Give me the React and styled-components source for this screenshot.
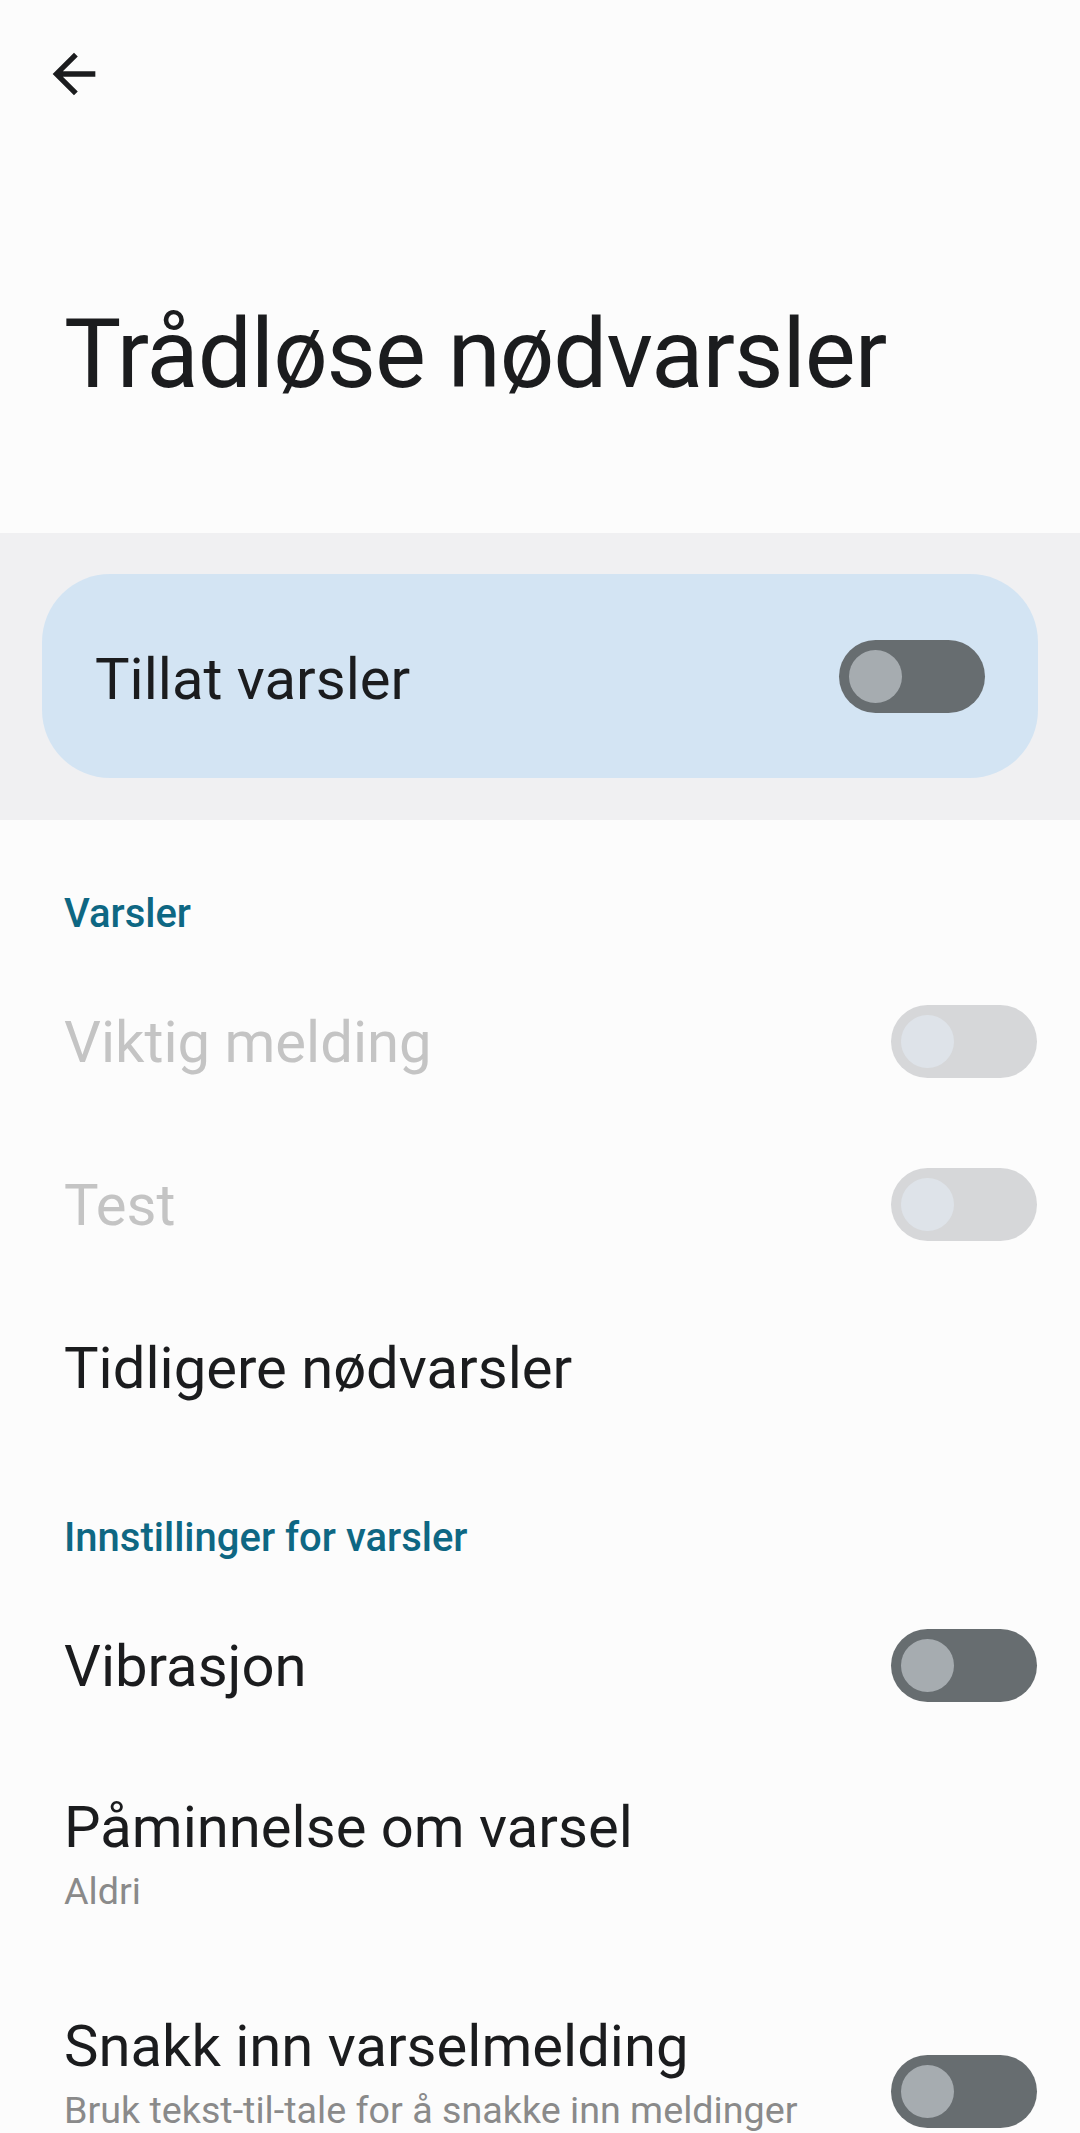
import styled, { createGlobalStyle } from 'styled-components';

const GlobalStyle = createGlobalStyle`
  body {
    margin: 0;
    background: #fcfcfc;
    font-family: Roboto, "Noto Sans", sans-serif;
    color: #1b1c1e;
  }
`;

function BackArrow(){
    return(
        <svg width="64" height="64" viewBox="0 0 24 24" fill="#1b1c1e">
            <path d="M20 11H7.83l5.59-5.59L12 4l-8 8 8 8 1.41-1.41L7.83 13H20v-2z" />
        </svg>
    );
}

function Toggle({ disabled, shift }){
    return(
        <Track $disabled={disabled} $shift={shift}>
            <Thumb $disabled={disabled} />
        </Track>
    );
}

export default function App(){
    return(
        <Page>
            <GlobalStyle />
            <TopBar>
                <BackButton><BackArrow /></BackButton>
            </TopBar>
            <Title>Trådløse nødvarsler</Title>
            <Band>
                <MainCard>
                    <CardLabel>Tillat varsler</CardLabel>
                    <Toggle />
                </MainCard>
            </Band>

            <SectionHeader $top={68}>Varsler</SectionHeader>
            <Row>
                <TextCol><ItemTitle $disabled>Viktig melding</ItemTitle></TextCol>
                <Toggle disabled />
            </Row>
            <Row>
                <TextCol><ItemTitle $disabled>Test</ItemTitle></TextCol>
                <Toggle disabled />
            </Row>
            <Row>
                <TextCol><ItemTitle>Tidligere nødvarsler</ItemTitle></TextCol>
            </Row>

            <SectionHeader $top={63}>Innstillinger for varsler</SectionHeader>
            <Row>
                <TextCol><ItemTitle>Vibrasjon</ItemTitle></TextCol>
                <Toggle />
            </Row>
            <Row $pad="47px 43px 47px 64px">
                <TextCol>
                    <ItemTitle>Påminnelse om varsel</ItemTitle>
                    <ItemSub>Aldri</ItemSub>
                </TextCol>
            </Row>
            <Row $pad="44px 43px 47px 64px">
                <TextCol>
                    <ItemTitle>Snakk inn varselmelding</ItemTitle>
                    <ItemSub>Bruk tekst-til-tale for å snakke inn meldinger</ItemSub>
                </TextCol>
                <Toggle shift={28} />
            </Row>
        </Page>
    );
}

const Page = styled.div`
width: 1080px;
min-height: 2133px;
background: #fcfcfc;
`;
const TopBar = styled.div`
height: 148px;
display: flex;
align-items: center;
padding-left: 42px;
box-sizing: border-box;
`;
const BackButton = styled.button`
width: 64px;
height: 64px;
padding: 0;
border: none;
background: none;
display: flex;
`;
const Title = styled.h1`
margin: 0;
padding: 146px 64px 119px;
font-size: 96px;
letter-spacing: -1px;
line-height: 120px;
font-weight: 400;
color: #1b1c1e;
`;
const Band = styled.div`
background: #f0f0f2;
padding: 41px 42px 42px;
`;
const MainCard = styled.div`
height: 204px;
border-radius: 68px;
background: #d3e4f3;
display: flex;
align-items: center;
justify-content: space-between;
padding: 0 53px;
box-sizing: border-box;
`;
const CardLabel = styled.span`
font-size: 58px;
padding-top: 6px;
color: #1b1c1e;
`;
const SectionHeader = styled.div`
padding: ${p => p.$top}px 64px 20px;
font-size: 40px;
line-height: 52px;
font-weight: 500;
color: #0e6783;
`;
const Row = styled.div`
min-height: 163px;
display: flex;
align-items: center;
justify-content: space-between;
gap: 40px;
padding: ${p => p.$pad || '0 43px 0 64px'};
box-sizing: border-box;
`;
const TextCol = styled.div`
display: flex;
flex-direction: column;
`;
const ItemTitle = styled.div`
font-size: 58px;
line-height: 66px;
color: ${p => p.$disabled ? '#c4c4c4' : '#1b1c1e'};
`;
const ItemSub = styled.div`
font-size: 37.7px;
line-height: 62px;
color: #8a8a8a;
`;
const Track = styled.div`
flex: none;
width: 146px;
height: 73px;
margin-top: ${p => p.$shift || 0}px;
border-radius: 37px;
background: ${p => p.$disabled ? '#d6d7d9' : '#676d70'};
display: flex;
align-items: center;
padding-left: 10px;
box-sizing: border-box;
`;
const Thumb = styled.div`
width: 53px;
height: 53px;
border-radius: 50%;
background: ${p => p.$disabled ? '#dee3e9' : '#a6acb0'};
`;
